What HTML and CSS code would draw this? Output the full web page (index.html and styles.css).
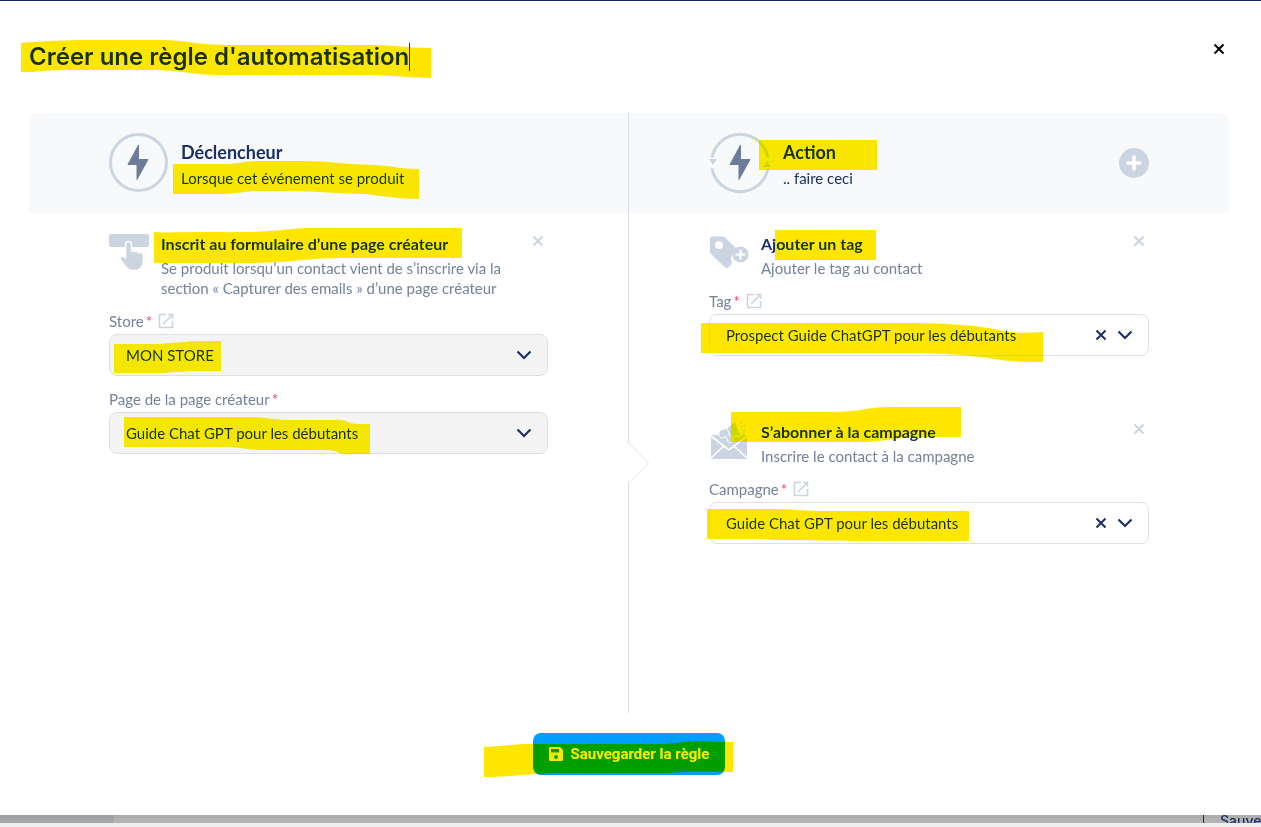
FILE: index.html
```html
<!DOCTYPE html>
<html lang="fr">
<head>
    <meta charset="UTF-8">
    <meta name="viewport" content="width=device-width, initial-scale=1.0">
    <title>Créer une règle d'automatisation</title>
    <link rel="stylesheet" href="styles.css">
</head>
<body>
    <!-- Shared icons -->
    <svg class="sprite" aria-hidden="true">
        <symbol id="icon-cross" viewBox="0 0 12 12">
            <path d="M1.5 1.5l9 9M10.5 1.5l-9 9" fill="none" stroke="currentColor" stroke-width="2"/>
        </symbol>
        <symbol id="icon-chevron" viewBox="0 0 16 10">
            <path d="M1.5 1.5L8 8l6.500-6.500" fill="none" stroke="currentColor" stroke-width="2.200"/>
        </symbol>
        <symbol id="icon-external" viewBox="0 0 16 16">
            <path d="M8 1.500H1.500v13h13V8M10 1.500h4.500V6M14.500 1.500L5 11" fill="none" stroke="currentColor" stroke-width="1.600"/>
        </symbol>
        <symbol id="icon-bolt" viewBox="0 0 22 36">
            <path d="M11.500 1L1 20.500h9V35.500L21 15.500h-9.500z" fill="#6d7d99" stroke="#6d7d99" stroke-linejoin="round"/>
        </symbol>
    </svg>

    <div class="dialog" role="dialog" aria-labelledby="dialog-title">
        <!-- Dialog Header -->
        <div class="dialog-header">
            <div class="title-wrap">
                <h1 id="dialog-title">Créer une règle d'automatisation</h1>
                <span class="caret"></span>
                <svg class="marker title-marker" viewBox="0 0 410 40">
                    <path d="M0 3C20 1 45 0 70 0H140C165 0 175 5 210 5H350C375 5 385 8 410 8V38C385 38 375 35 340 35H200C170 35 160 30 130 30H50C25 30 15 32 10 32H0z"/>
                </svg>
            </div>
            <button class="close-button" aria-label="Fermer"><svg width="12" height="12"><use href="#icon-cross"/></svg></button>
        </div>

        <div class="columns">
            <!-- Trigger Column -->
            <section class="column trigger-column">
                <div class="column-head">
                    <svg class="head-icon" width="60" height="60" viewBox="0 0 60 60">
                        <circle cx="29.500" cy="29.500" r="28" fill="none" stroke="#cbd5e1" stroke-width="3"/>
                        <use href="#icon-bolt" x="18" y="11" width="22" height="36"/>
                    </svg>
                    <div class="head-text">
                        <h2>Déclencheur</h2>
                        <p>Lorsque cet événement se produit</p>
                    </div>
                </div>
                <div class="column-body">
                    <div class="item">
                        <div class="item-head">
                            <svg class="item-icon" width="40" height="40" viewBox="0 0 40 40">
                                <rect x="0" y="2" width="40" height="13" rx="2" fill="#cbd5e1"/>
                                <path d="M16.500 12.500a3 3 0 0 1 6 0v6.500c1-.8 2.800-.5 3.300.6 1.200-.7 2.900-.2 3.300 1 2.600-.5 5.400.3 5.400 2.900v5.500c0 5-3 9.500-8.500 9.500h-2.500c-4.500 0-6.500-3-8.500-5.800l-3.300-4.500c-1.800-2.600 1-5.300 3.300-3.600l1.500 1.200z" fill="#cbd5e1" stroke="#fff" stroke-width="1.500"/>
                            </svg>
                            <div class="item-text">
                                <h3>Inscrit au formulaire d’une page créateur</h3>
                                <p>Se produit lorsqu’un contact vient de s’inscrire via la section « Capturer des emails » d’une page créateur</p>
                            </div>
                            <button class="remove-button" aria-label="Supprimer"><svg width="12" height="12"><use href="#icon-cross"/></svg></button>
                        </div>
                        <div class="field">
                            <div class="field-label">
                                <label for="store">Store<span class="required">*</span></label>
                                <a href="#" aria-label="Ouvrir les stores"><svg width="16" height="16"><use href="#icon-external"/></svg></a>
                            </div>
                            <div class="select-wrap">
                                <select id="store" class="muted"><option>MON STORE</option></select>
                                <svg class="chevron" width="16" height="10"><use href="#icon-chevron"/></svg>
                            </div>
                        </div>
                        <div class="field">
                            <div class="field-label">
                                <label for="page">Page de la page créateur<span class="required">*</span></label>
                            </div>
                            <div class="select-wrap">
                                <select id="page" class="muted"><option>Guide Chat GPT pour les débutants</option></select>
                                <svg class="chevron" width="16" height="10"><use href="#icon-chevron"/></svg>
                            </div>
                        </div>
                    </div>
                </div>
                <!-- Highlighter strokes -->
                <svg class="marker" width="520" height="360">
                    <path d="M144 51H200C215 50 215 48 230 48H275C300 48 310 51 345 52C365 53 370 56 390 56V86C370 86 355 83 335 81C310 81 290 78 260 78H225C210 79 205 81 190 81H144z"/>
                    <path d="M125 119C135 120 150 119 180 119C260 120 250 115 285 115H433V145H315C270 145 270 150 215 150H125z"/>
                    <path d="M85 231H130C145 230 160 228 175 228H192V258H170C155 258 145 260 125 260H85z"/>
                    <path d="M95 304H220C240 304 240 307 260 307H311C318 307 320 311 328 311H341V341H316C310 341 308 337 298 337H230C215 336 210 334 190 334H95z"/>
                </svg>
            </section>

            <!-- Action Column -->
            <section class="column action-column">
                <div class="column-head">
                    <svg class="head-icon" width="62" height="60" viewBox="0 0 62 60">
                        <path d="M3 24.500a28.500 28.500 0 0 1 56 0M3 35.500a28.500 28.500 0 0 0 56 0" fill="none" stroke="#cbd5e1" stroke-width="3"/>
                        <path d="M0 26h8l-4 6zM54 34h8l-4-6z" fill="#cbd5e1"/>
                        <use href="#icon-bolt" x="20" y="11" width="22" height="36"/>
                    </svg>
                    <div class="head-text">
                        <h2>Action</h2>
                        <p>.. faire ceci</p>
                    </div>
                    <button class="add-button" aria-label="Ajouter une action">
                        <svg width="30" height="30" viewBox="0 0 30 30">
                            <circle cx="15" cy="15" r="15" fill="#cbd5e1"/>
                            <path d="M15 9v12M9 15h12" stroke="#fff" stroke-width="3.600" stroke-linecap="round"/>
                        </svg>
                    </button>
                </div>
                <div class="column-body">
                    <svg class="divider-arrow" width="22" height="42" viewBox="0 0 22 42">
                        <path d="M0 1h1l20 20-20 20H0z" fill="#fff"/>
                        <path d="M.5 0v1l20 20-20 20v1" fill="none" stroke="#e0e4ea"/>
                    </svg>
                    <div class="item">
                        <div class="item-head">
                            <svg class="item-icon" width="40" height="40" viewBox="0 0 40 40">
                                <path fill-rule="evenodd" d="M3 4.500h10.500c1 0 1.800.3 2.500 1L29 18a9.500 9.500 0 0 0-6.500 11.500l.5 2.500-4 3.500c-1 .8-2 .7-3 0L2 22c-.7-.7-1-1.500-1-2.500v-13c0-1.200.8-2 2-2zM10 9a4 4 0 1 0 0 8 4 4 0 0 0 0-8z" fill="#cbd5e1"/>
                                <circle cx="31.500" cy="22.500" r="8" fill="#cbd5e1"/>
                                <path d="M31.500 18.500v8M27.500 22.500h8" stroke="#fff" stroke-width="2.200" stroke-linecap="round"/>
                            </svg>
                            <div class="item-text">
                                <h3>Ajouter un tag</h3>
                                <p>Ajouter le tag au contact</p>
                            </div>
                            <button class="remove-button" aria-label="Supprimer"><svg width="12" height="12"><use href="#icon-cross"/></svg></button>
                        </div>
                        <div class="field">
                            <div class="field-label">
                                <label for="tag">Tag<span class="required">*</span></label>
                                <a href="#" aria-label="Ouvrir les tags"><svg width="16" height="16"><use href="#icon-external"/></svg></a>
                            </div>
                            <div class="select-wrap">
                                <select id="tag"><option>Prospect Guide ChatGPT pour les débutants</option></select>
                                <button class="clear-button" aria-label="Effacer"><svg width="12" height="12"><use href="#icon-cross"/></svg></button>
                                <svg class="chevron" width="16" height="10"><use href="#icon-chevron"/></svg>
                            </div>
                        </div>
                    </div>
                    <div class="item">
                        <div class="item-head">
                            <svg class="item-icon" width="40" height="40" viewBox="0 0 40 40">
                                <path d="M2 15h36v24H2z" fill="#cbd5e1"/>
                                <path d="M2 16l18 14 18-14M2 38l13-12M38 38L25 26" fill="none" stroke="#fff" stroke-width="1.600"/>
                                <path d="M12 10l6-2L26 1l6 15-9 .5 1 4c0 2-4 3-5 1l-2-5-3 1.500c-4 1-6-5.500-2-8z" fill="#cbd5e1" stroke="#fff"/>
                                <path d="M31 4l2-3M33 7l4-2M33.500 10.500H37M33 13l3 2" fill="none" stroke="#cbd5e1" stroke-width="1.300"/>
                                <path d="M18 8l3 8" stroke="#fff"/>
                            </svg>
                            <div class="item-text">
                                <h3>S’abonner à la campagne</h3>
                                <p>Inscrire le contact à la campagne</p>
                            </div>
                            <button class="remove-button" aria-label="Supprimer"><svg width="12" height="12"><use href="#icon-cross"/></svg></button>
                        </div>
                        <div class="field">
                            <div class="field-label">
                                <label for="campaign">Campagne<span class="required">*</span></label>
                                <a href="#" aria-label="Ouvrir les campagnes"><svg width="16" height="16"><use href="#icon-external"/></svg></a>
                            </div>
                            <div class="select-wrap">
                                <select id="campaign"><option>Guide Chat GPT pour les débutants</option></select>
                                <button class="clear-button" aria-label="Effacer"><svg width="12" height="12"><use href="#icon-cross"/></svg></button>
                                <svg class="chevron" width="16" height="10"><use href="#icon-chevron"/></svg>
                            </div>
                        </div>
                    </div>
                </div>
                <!-- Highlighter strokes -->
                <svg class="marker" width="520" height="440">
                    <path d="M130 27H248V57H130z"/>
                    <path d="M146 117H247V147H146z"/>
                    <path d="M72 210H285C345 211 360 215 375 218C385 220 400 220 414 219V249C390 249 375 248 365 246C340 242 310 240 280 240H72z"/>
                    <path d="M102 299H195C240 299 230 294 265 294H332V324H292C265 324 260 329 230 329H102z"/>
                    <path d="M78 396H150C175 397 180 398 200 398H340V428H295C260 428 190 428 170 427C140 427 130 426 110 426H78z"/>
                </svg>
            </section>
        </div>

        <!-- Dialog Footer -->
        <div class="dialog-footer">
            <div class="save-wrap">
                <button class="save-button">
                    <svg width="14" height="14" viewBox="0 0 14 14">
                        <path fill-rule="evenodd" d="M1.500 0H11l3 3v9.500c0 .9-.6 1.500-1.500 1.500h-11C.6 14 0 13.400 0 12.500v-11C0 .6.6 0 1.500 0zM2 2v3.500h8V2zM7 8a2 2 0 1 0 0 4 2 2 0 0 0 0-4z" fill="#fff"/>
                    </svg>
                    Sauvegarder la règle
                </button>
                <svg class="marker save-marker" viewBox="0 0 249 36">
                    <path d="M0 6C20 5 30 3 49 3H170C190 3 190 1 215 0C230 1 240 1 249 1V31H200C190 32 180 32 160 32H70C45 33 25 36 0 36z"/>
                </svg>
            </div>
        </div>
    </div>

    <!-- Page behind the dialog -->
    <div class="page-behind">
        <div class="page-side"></div>
        <div class="page-action">Sauvegarder</div>
    </div>
</body>
</html>
```
FILE: styles.css
```css
* {
    box-sizing: border-box;
    margin: 0;
    padding: 0;
}

body {
    background: #eeeeee;
    border-top: 1px solid #14265a;
    color: #1b2f66;
    font-family: Lato, 'Noto Sans', sans-serif;
    font-size: 15px;
    line-height: 20px;
    overflow: hidden;
}

button {
    background: none;
    border: none;
    cursor: pointer;
    display: flex;
    align-items: center;
    justify-content: center;
}

.sprite {
    position: absolute;
    width: 0;
    height: 0;
}

/* Dialog */
.dialog {
    background: white;
    padding: 40px 32px 40px 29px;
}

.dialog-header {
    display: flex;
    justify-content: space-between;
    align-items: flex-start;
    margin-bottom: 40px;
}

.title-wrap {
    position: relative;
    display: flex;
    align-items: center;
}

.dialog-header h1 {
    font-family: Inter, sans-serif;
    font-size: 24px;
    font-weight: 600;
    line-height: 32px;
}

.caret {
    width: 1px;
    height: 28px;
    background: #1b2f66;
}

.close-button {
    width: 20px;
    height: 16px;
    color: black;
}

/* Highlighter */
.marker {
    position: absolute;
    top: 0;
    left: 0;
    fill: #ffe600;
    mix-blend-mode: darken;
    pointer-events: none;
}

.title-marker {
    top: -1px;
    left: -8px;
    width: 410px;
    height: 40px;
}

.save-marker {
    top: 8px;
    left: -49px;
    width: 249px;
    height: 36px;
}

/* Columns */
.columns {
    display: grid;
    grid-template-columns: 1fr 1fr;
}

.column {
    position: relative;
    min-height: 600px;
    display: flex;
    flex-direction: column;
}

.trigger-column {
    border-right: 1px solid #dcdfe6;
}

.column-head {
    background: #f8f9fb;
    border-top-left-radius: 8px;
    height: 100px;
    padding: 0 80px;
    display: flex;
    align-items: center;
    gap: 12px;
}

.action-column .column-head {
    border-radius: 0 8px 0 0;
}

.head-text {
    padding-top: 4px;
}

.column-head h2 {
    font-size: 18px;
    font-weight: 700;
    line-height: 26px;
}

.column-head p {
    line-height: 26px;
}

.head-icon {
    flex-shrink: 0;
    overflow: visible;
}

.add-button {
    margin-left: auto;
}

.column-body {
    position: relative;
    flex: 1;
    padding: 19px 80px;
    display: flex;
    flex-direction: column;
    gap: 64px;
}

.divider-arrow {
    position: absolute;
    top: calc(50% - 21px);
    left: -1px;
}

/* Items */
.item {
    display: flex;
    flex-direction: column;
    gap: 12px;
}

.item-head {
    display: flex;
    align-items: flex-start;
    gap: 12px;
}

/* The icon may hang below a short text without pushing the field down */
.item-icon {
    flex-shrink: 0;
    margin-bottom: -8px;
}

.item-text {
    flex: 1;
}

.item-text h3 {
    font-size: 16px;
    font-weight: 700;
    line-height: 24px;
    margin-bottom: 2px;
}

.item-text p,
.field-label {
    color: #74829c;
}

.remove-button {
    width: 20px;
    height: 18px;
    color: #cbd5e1;
}

.field-label {
    height: 22px;
    margin-bottom: 2px;
    display: flex;
    align-items: center;
    gap: 6px;
}

.field-label a {
    color: #cbd5e1;
    display: flex;
}

.required {
    color: #ff3b5c;
    margin-left: 2px;
}

.select-wrap {
    position: relative;
}

select {
    appearance: none;
    width: 100%;
    height: 42px;
    padding: 0 64px 0 16px;
    background: white;
    border: 1px solid #dcdfe6;
    border-radius: 8px;
    color: #1b2f66;
    font: inherit;
}

select.muted {
    background: #f4f4f4;
}

.chevron {
    position: absolute;
    top: 16px;
    right: 16px;
    pointer-events: none;
}

.clear-button {
    position: absolute;
    top: 11px;
    right: 38px;
    width: 20px;
    height: 20px;
    color: #1b2f66;
}

/* Dialog Footer */
.dialog-footer {
    display: flex;
    justify-content: center;
    margin-top: 20px;
}

.save-wrap {
    position: relative;
}

.save-button {
    background: #009fff;
    border-radius: 8px;
    color: white;
    font-family: Roboto, sans-serif;
    font-size: 15px;
    font-weight: 700;
    height: 42px;
    padding: 0 16px;
    gap: 8px;
}

/* Page behind the dialog */
.page-behind {
    height: 8px;
    background: linear-gradient(#aaaaaa, #b8b8b8);
    display: flex;
    justify-content: space-between;
    overflow: hidden;
}

.page-side {
    width: 114px;
    background: linear-gradient(#9c9da2, #a9aaae);
}

.page-action {
    width: 58px;
    padding-left: 16px;
    border-left: 1px solid #14265a;
    font-family: Inter, sans-serif;
    font-size: 14px;
    font-weight: 500;
    line-height: 12px;
    overflow: hidden;
}
```
